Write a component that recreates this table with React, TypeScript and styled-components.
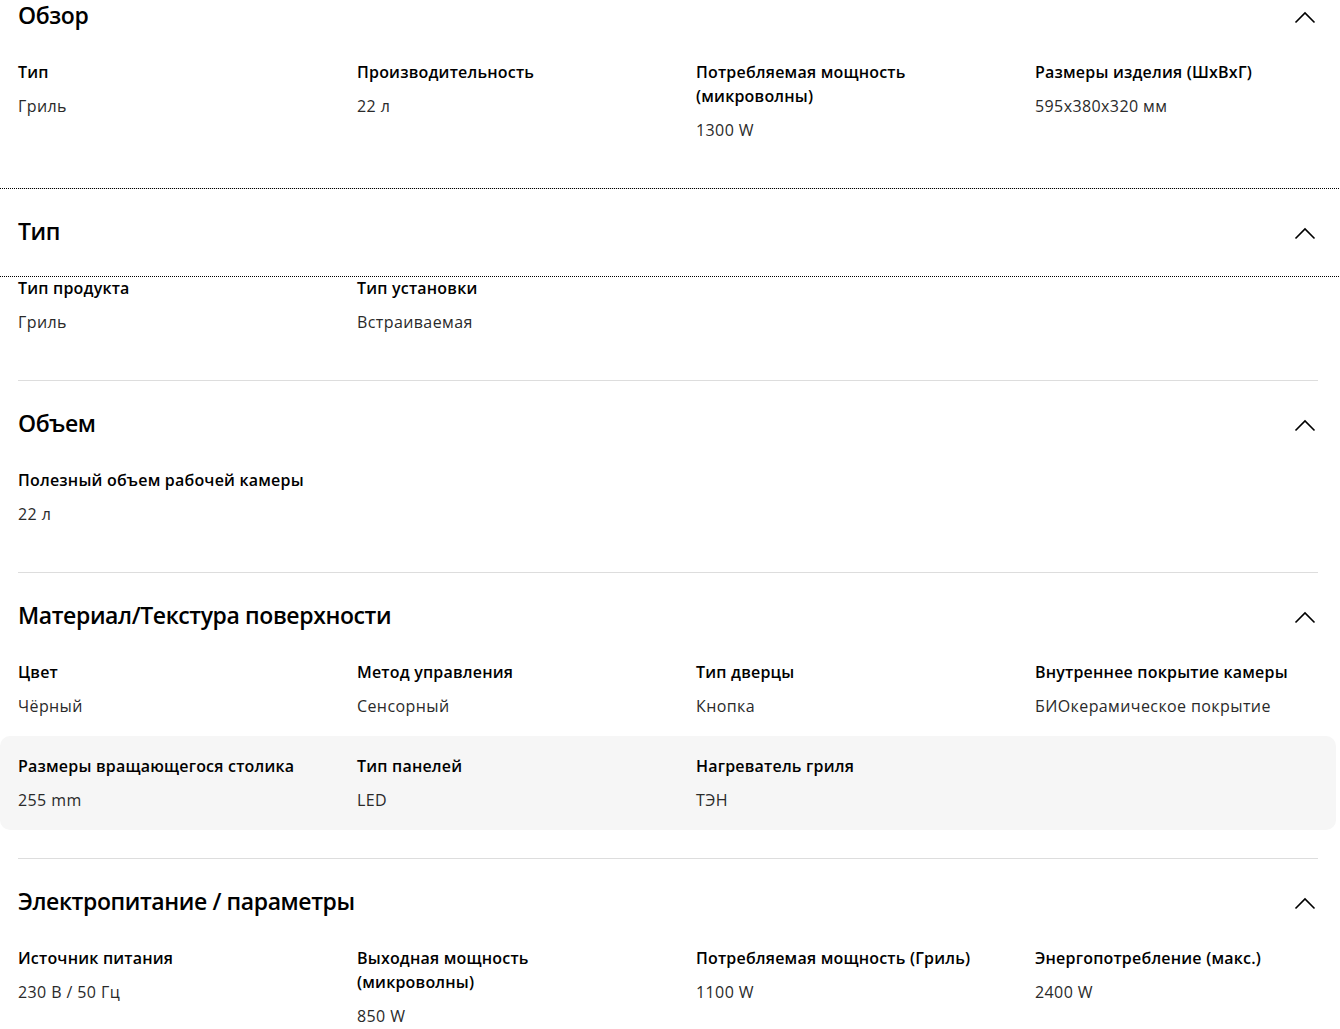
import React from "react";
import styled, { createGlobalStyle } from "styled-components";

const Global = createGlobalStyle`
  html, body { margin: 0; padding: 0; background: #fff; }
  body { font-family: "Open Sans", "Noto Sans", sans-serif; color: #000; overflow: hidden; }
`;

const Page = styled.div`
  width: 1340px;
  margin-top: -27px;
`;

const Section = styled.section``;

const Header = styled.div<{ $focused?: boolean }>`
  height: 87px;
  display: flex;
  align-items: center;
  justify-content: space-between;
  padding: 0 24px 0 18px;
  box-sizing: border-box;
  outline: ${(p) => (p.$focused ? "1px dotted #000" : "none")};
  cursor: pointer;
`;

const Title = styled.h2`
  margin: 0 0 3px;
  font-size: 23px;
  line-height: 32px;
  font-weight: 600;
  letter-spacing: -0.4px;
  color: #000;
`;

const Body = styled.div<{ $last?: boolean }>`
  margin: -18px 22px 0 18px;
  padding-bottom: 28px;
  border-bottom: ${(p) => (p.$last ? "none" : "1px solid #dddddd")};
`;

const Row = styled.div<{ $highlight?: boolean }>`
  display: grid;
  grid-template-columns: repeat(4, 288px);
  column-gap: 51px;
  padding: 18px;
  margin: 0 -18px;
  border-radius: 10px;
  background: ${(p) => (p.$highlight ? "#f6f6f6" : "transparent")};
`;

const Item = styled.div`
  display: flex;
  flex-direction: column;
  gap: 10px;
`;

const Label = styled.div`
  font-size: 16px;
  line-height: 24px;
  font-weight: 600;
  color: #000;
  letter-spacing: 0.2px;
`;

const Value = styled.div`
  font-size: 16px;
  line-height: 24px;
  font-weight: 400;
  color: #2a2a2a;
  letter-spacing: 0.4px;
`;

const Chevron = () => (
  <svg width="22" height="14" viewBox="0 0 22 14" fill="none">
    <path d="M1.5 12.5 L11 3 L20.5 12.5" stroke="#000" strokeWidth="1.6" />
  </svg>
);

type Spec = [string, string];
type SectionData = {
  title: string;
  rows: Spec[][];
  highlightRow?: number;
  focused?: boolean;
};

const data: SectionData[] = [
  {
    title: "Обзор",
    rows: [
      [
        ["Тип", "Гриль"],
        ["Производительность", "22 л"],
        ["Потребляемая мощность (микроволны)", "1300 W"],
        ["Размеры изделия (ШхВхГ)", "595x380x320 мм"],
      ],
    ],
  },
  {
    title: "Тип",
    focused: true,
    rows: [
      [
        ["Тип продукта", "Гриль"],
        ["Тип установки", "Встраиваемая"],
      ],
    ],
  },
  {
    title: "Объем",
    rows: [[["Полезный объем рабочей камеры", "22 л"]]],
  },
  {
    title: "Материал/Текстура поверхности",
    highlightRow: 1,
    rows: [
      [
        ["Цвет", "Чёрный"],
        ["Метод управления", "Сенсорный"],
        ["Тип дверцы", "Кнопка"],
        ["Внутреннее покрытие камеры", "БИОкерамическое покрытие"],
      ],
      [
        ["Размеры вращающегося столика", "255 mm"],
        ["Тип панелей", "LED"],
        ["Нагреватель гриля", "ТЭН"],
      ],
    ],
  },
  {
    title: "Электропитание / параметры",
    rows: [
      [
        ["Источник питания", "230 В / 50 Гц"],
        ["Выходная мощность (микроволны)", "850 W"],
        ["Потребляемая мощность (Гриль)", "1100 W"],
        ["Энергопотребление (макс.)", "2400 W"],
      ],
    ],
  },
];

export default function App() {
  return (
    <>
      <Global />
      <Page>
        {data.map((s, si) => (
          <Section key={s.title}>
            <Header $focused={s.focused}>
              <Title>{s.title}</Title>
              <Chevron />
            </Header>
            <Body $last={si === data.length - 1}>
              {s.rows.map((row, ri) => (
                <Row key={ri} $highlight={s.highlightRow === ri}>
                  {row.map(([l, v]) => (
                    <Item key={l}>
                      <Label>{l}</Label>
                      <Value>{v}</Value>
                    </Item>
                  ))}
                </Row>
              ))}
            </Body>
          </Section>
        ))}
      </Page>
    </>
  );
}
